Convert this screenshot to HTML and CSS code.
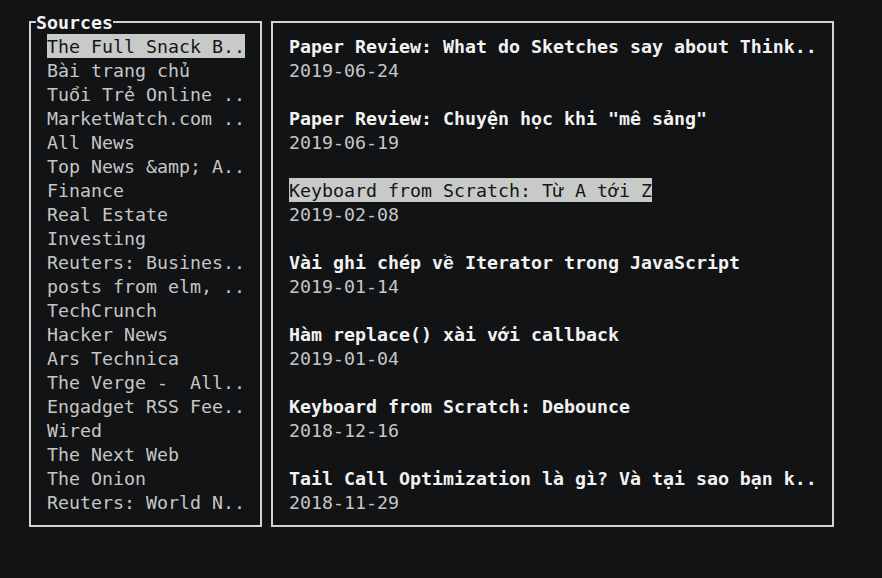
FILE: index.html
```html
<!DOCTYPE html>
<html lang="vi">
<head>
<meta charset="utf-8">
<title>Feeds</title>
<link rel="stylesheet" href="styles.css">
</head>
<body>
<div class="screen">
  <section class="box sources">
    <h2 class="legend">Sources</h2>
    <ul class="list">
      <li><span class="sel">The Full Snack B..</span></li>
      <li>Bài trang chủ</li>
      <li>Tu<span class="fix">ổ</span>i Trẻ Online ..</li>
      <li>MarketWatch.com ..</li>
      <li>All News</li>
      <li>Top News &amp;amp; A..</li>
      <li>Finance</li>
      <li>Real Estate</li>
      <li>Investing</li>
      <li>Reuters: Busines..</li>
      <li>posts from elm, ..</li>
      <li>TechCrunch</li>
      <li>Hacker News</li>
      <li>Ars Technica</li>
      <li>The Verge -  All..</li>
      <li>Engadget RSS Fee..</li>
      <li>Wired</li>
      <li>The Next Web</li>
      <li>The Onion</li>
      <li>Reuters: World N..</li>
    </ul>
  </section>
  <section class="box articles">
    <ul class="posts">
      <li><div class="title">Paper Review: What do Sketches say about Think..</div><div class="date">2019-06-24</div></li>
      <li><div class="title">Paper Review: Chuyện học khi "mê sảng"</div><div class="date">2019-06-19</div></li>
      <li><div class="title plain"><span class="sel">Keyboard from Scratch: Từ A tới Z</span></div><div class="date">2019-02-08</div></li>
      <li><div class="title">Vài ghi chép v<span class="fix">ề</span> Iterator trong JavaScript</div><div class="date">2019-01-14</div></li>
      <li><div class="title">Hàm replace() xài với callback</div><div class="date">2019-01-04</div></li>
      <li><div class="title">Keyboard from Scratch: Debounce</div><div class="date">2018-12-16</div></li>
      <li><div class="title">Tail Call Optimization là gì? Và tại sao bạn k..</div><div class="date">2018-11-29</div></li>
    </ul>
  </section>
</div>
</body>
</html>
```
FILE: styles.css
```css
html, body {
  margin: 0;
  padding: 0;
  background: #121315;
}
body {
  width: 882px;
  height: 578px;
  overflow: hidden;
  font-family: "DejaVu Sans Mono", "Liberation Mono", monospace;
  font-size: 18.27px;
  line-height: 26px;
  color: #c6c6c6;
}
.screen {
  display: flex;
  gap: 9px;
  padding: 21px 0 0 29px;
  align-items: flex-start;
}
.box {
  position: relative;
  border: 2px solid #d2d2d2;
  padding: 11px 16px;
  box-sizing: border-box;
  height: 506px;
}
.sources {
  width: 233px;
}
.articles {
  width: 563px;
}
.legend {
  position: absolute;
  top: -13px;
  left: 5px;
  height: 24px;
  margin: 0;
  padding: 0;
  font-size: inherit;
  font-weight: bold;
  line-height: 26px;
  color: #f2f2f2;
  background: #121315;
}
.list, .posts {
  list-style: none;
  margin: 0;
  padding: 0;
}
.list li {
  height: 24px;
  white-space: pre;
}
.posts li {
  height: 72px;
}
.posts li:last-child {
  height: 48px;
}
.title {
  height: 24px;
  white-space: pre;
  font-weight: bold;
  color: #f2f2f2;
}
.title.plain {
  font-weight: normal;
}
.date {
  height: 24px;
  white-space: pre;
}
.fix {
  display: inline-block;
  width: 11px;
  font-family: "Liberation Mono", monospace;
  font-size: 18.33px;
}
.sel {
  display: inline-block;
  height: 24px;
  vertical-align: top;
  background: #c8cac8;
  color: #141516;
  font-weight: normal;
}
```
